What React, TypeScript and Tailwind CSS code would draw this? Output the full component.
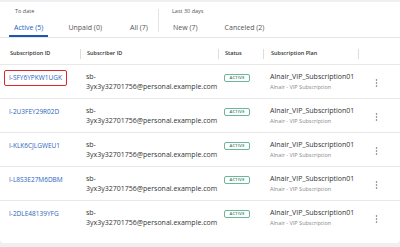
const ids = [
  "I-SFY6YPKW1UGK",
  "I-2U3FEY29R02D",
  "I-KLK6CJLGWEU1",
  "I-L8S3E27M6DBM",
  "I-2DLE48139YFG",
];

const Kebab = () => (
  <svg width="3" height="8" viewBox="0 0 3 8" className="text-[#666]">
    <circle cx="1.5" cy="1" r="0.75" fill="currentColor" />
    <circle cx="1.5" cy="4" r="0.75" fill="currentColor" />
    <circle cx="1.5" cy="7" r="0.75" fill="currentColor" />
  </svg>
);

const Tab = ({ label, active, className }: { label: string; active?: boolean; className?: string }) => (
  <div
    className={`h-[14px] px-[5px] flex items-start text-[7px] leading-[9px] ${
      active ? "text-[#1e63c4] border-b-2 border-[#1e55b8]" : "text-[#555]"
    } ${className ?? ""}`}
  >
    {label}
  </div>
);

const App = () => {
  return (
    <div className="w-[400px] h-[247px] bg-[#efeff1] pt-[2px] font-['Open_Sans',sans-serif] overflow-hidden leading-none">
      <div className="bg-white h-[241px] rounded-b-[4px]">
        {/* date filter tabs */}
        <div className="flex h-[36px] border-b border-[#e4e4e4]">
          <div className="w-[158px] pl-[9px] pt-[6px]">
            <div className="pl-[6px] text-[5.5px] leading-[7px] text-[#555]">To date</div>
            <div className="flex mt-[8px]">
              <Tab label="Active (5)" active />
              <Tab label="Unpaid (0)" className="ml-[15px]" />
              <Tab label="All (7)" className="ml-[18px]" />
            </div>
          </div>
          <div className="w-px bg-[#e4e4e4] mt-[7px] h-[23px]" />
          <div className="pl-[9px] pt-[6px]">
            <div className="pl-[4px] text-[5.5px] leading-[7px] text-[#555]">Last 30 days</div>
            <div className="flex mt-[8px]">
              <Tab label="New (7)" />
              <Tab label="Canceled (2)" className="ml-[17px]" />
            </div>
          </div>
        </div>

        {/* table header */}
        <div className="grid grid-cols-[80px_138px_45px_95px_42px] h-[27px] pt-[6px] items-center border-b border-[#e8e8e8] text-[5.5px] font-semibold text-[#333]">
          <div className="pl-[10px] h-[10px] flex items-center">Subscription ID</div>
          <div className="pl-[6px] border-l border-[#ddd] h-[10px] flex items-center">Subscriber ID</div>
          <div className="pl-[6px] border-l border-[#ddd] h-[10px] flex items-center">Status</div>
          <div className="pl-[7px] border-l border-[#ddd] h-[10px] flex items-center">Subscription Plan</div>
          <div className="border-l border-[#ddd] h-[10px]" />
        </div>

        {/* rows */}
        {ids.map((id, i) => (
          <div
            key={id}
            className={`grid grid-cols-[80px_138px_45px_95px_42px] h-[34px] items-start ${
              i < ids.length - 1 ? "border-b border-[#e8e8e8]" : ""
            }`}
          >
            <div className="pl-[4px] pt-[5px] flex">
              <span
                className={`px-[4px] py-[2px] text-[6.5px] leading-[10px] text-[#2b64c0] rounded-[2px] border ${
                  i === 0 ? "border-[#d9272e]" : "border-transparent"
                }`}
              >
                {id}
              </span>
            </div>
            <div className="pl-[6px] pt-[7px] text-[7px] leading-[10px] text-[#333]">
              <div>sb-</div>
              <div>3yx3y32701756@personal.example.com</div>
            </div>
            <div className="pl-[6px] pt-[8.5px] flex">
              <span className="border border-[#6bb79a] rounded-[2px] px-[4.5px] text-[4.2px] leading-[6px] font-semibold text-[#2f7a5e] tracking-[0.2px]">
                ACTIVE
              </span>
            </div>
            <div className="pl-[7px] pt-[7px]">
              <div className="text-[7px] leading-[10px] text-[#333]">Alnair_VIP_Subscription01</div>
              <div className="text-[5.5px] leading-[10px] text-[#888]">Alnair - VIP Subscription</div>
            </div>
            <div className="pl-[17px] pt-[14px] flex">
              <Kebab />
            </div>
          </div>
        ))}
      </div>
    </div>
  );
};

export default App;
